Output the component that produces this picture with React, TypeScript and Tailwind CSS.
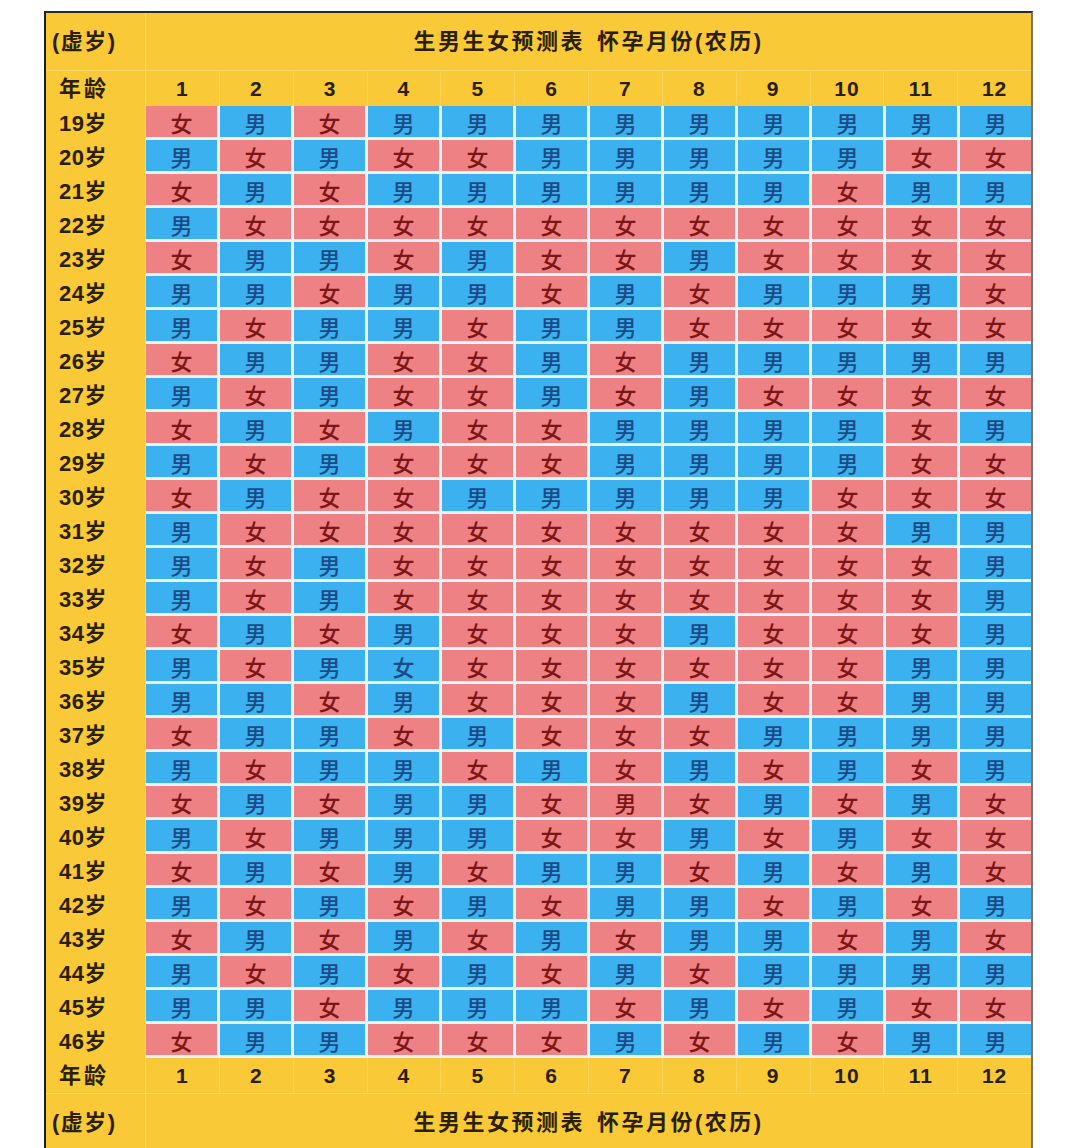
import React from 'react';

// 19岁 ~ 46岁, months 1-12
const rows: string[] = [
  '女男女男男男男男男男男男',
  '男女男女女男男男男男女女',
  '女男女男男男男男男女男男',
  '男女女女女女女女女女女女',
  '女男男女男女女男女女女女',
  '男男女男男女男女男男男女',
  '男女男男女男男女女女女女',
  '女男男女女男女男男男男男',
  '男女男女女男女男女女女女',
  '女男女男女女男男男男女男',
  '男女男女女女男男男男女女',
  '女男女女男男男男男女女女',
  '男女女女女女女女女女男男',
  '男女男女女女女女女女女男',
  '男女男女女女女女女女女男',
  '女男女男女女女男女女女男',
  '男女男女女女女女女女男男',
  '男男女男女女女男女女男男',
  '女男男女男女女女男男男男',
  '男女男男女男女男女男女男',
  '女男女男男女男女男女男女',
  '男女男男男女女男女男女女',
  '女男女男女男男女男女男女',
  '男女男女男女男男女男女男',
  '女男女男女男女男男女男女',
  '男女男女男女男女男男男男',
  '男男女男男男女男女男女女',
  '女男男女女女男女男女男男',
];

// cells whose colour doesn't follow the text in the original chart
const bgOverride: Record<string, 'boy' | 'girl'> = {
  '35-3': 'boy',
  '39-6': 'girl',
};

const months = [1, 2, 3, 4, 5, 6, 7, 8, 9, 10, 11, 12];

function TitleRow() {
  return (
    <div className="flex h-[57px]">
      <div className="w-[100px] shrink-0 flex items-center pl-[6px] border-r border-[#fcd866] text-[22px] font-bold tracking-[1.5px] text-[#2a2000]">
        (虚岁)
      </div>
      <div className="flex-1 flex items-center justify-center gap-[12px] text-[22px] font-bold tracking-[2.5px] text-[#2a2000]">
        <span>生男生女预测表</span>
        <span>怀孕月份(农历)</span>
      </div>
    </div>
  );
}

function MonthRow() {
  return (
    <div className="flex h-[35px]">
      <div className="w-[100px] shrink-0 flex items-center pl-[13px] border-r border-[#fcd866] text-[22px] font-bold tracking-[3px] text-[#2a2000]">
        年龄
      </div>
      <div className="flex-1 grid grid-cols-12 gap-x-px bg-[#fbd35a]">
        {months.map((m) => (
          <div
            key={m}
            className="bg-[#f9c937] flex items-center justify-center text-[21px] font-bold tracking-[1px] text-[#2a2000]"
          >
            {m}
          </div>
        ))}
      </div>
    </div>
  );
}

export default function App() {
  return (
    <div className="h-[1148px] overflow-hidden bg-white pl-[44px] pt-[11px] font-['Liberation_Sans','Noto_Sans_CJK_SC',sans-serif]">
      <div className="w-[989px] bg-[#f9c937] border-l-2 border-t-2 border-r-2 border-l-[#1e1e1e] border-t-[#2a2a2a] border-r-[#7d7468]">
        <div className="border-b border-[#fcd866]">
          <TitleRow />
        </div>
        <MonthRow />
        {rows.map((row, i) => {
          const age = 19 + i;
          return (
            <div key={age} className="flex h-[34px]">
              <div className="w-[100px] shrink-0 flex items-center pl-[13px] border-r border-[#fcd866] text-[22px] font-bold tracking-[0.5px] text-[#2a2000]">
                {age}岁
              </div>
              <div className="flex-1 grid grid-cols-12 gap-x-[3px] pb-[3px] bg-[#e9f4f8]">
                {row.split('').map((ch, j) => {
                  const kind = bgOverride[`${age}-${j}`] ?? (ch === '男' ? 'boy' : 'girl');
                  return (
                    <div
                      key={j}
                      className={`flex items-center justify-center text-[22px] leading-none font-medium font-['Noto_Sans_CJK_SC',sans-serif] ${
                        kind === 'boy'
                          ? 'bg-[#3bb1ef] text-[#1c4a86]'
                          : 'bg-[#ee8184] text-[#7c1616]'
                      }`}
                    >
                      {ch}
                    </div>
                  );
                })}
              </div>
            </div>
          );
        })}
        <div className="border-b border-[#fcd866]">
          <MonthRow />
        </div>
        <TitleRow />
      </div>
    </div>
  );
}
